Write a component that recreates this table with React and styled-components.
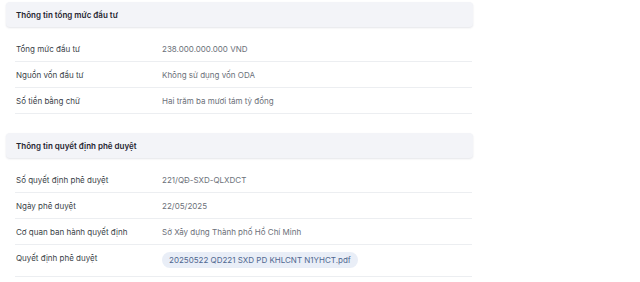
import React from "react";
import styled, { createGlobalStyle } from "styled-components";

const GlobalStyle = createGlobalStyle`
  body {
    margin: 0;
    background: #ffffff;
    font-family: Inter, "Noto Sans", sans-serif;
  }
`;

const Page = styled.div`
  width: 467px;
  padding: 2px 0 0 6px;
  display: flex;
  flex-direction: column;
  gap: 19px;
`;

const Section = styled.section`
  display: flex;
  flex-direction: column;
`;

const SectionHeader = styled.div`
  height: 25px;
  display: flex;
  align-items: center;
  padding-left: 10px;
  background: #f3f4f8;
  border-radius: 4px;
  box-shadow: 0 1px 2px rgba(30, 40, 70, 0.12);
  font-size: 8px;
  font-weight: 600;
  color: #1f2430;
  margin-bottom: 9px;
`;

const Row = styled.div`
  display: grid;
  grid-template-columns: 146px 1fr;
  align-items: ${(p) => (p.tall ? "start" : "center")};
  height: ${(p) => (p.tall ? 32 : 26)}px;
  padding: ${(p) => (p.tall ? "8px 0 0" : "0")};
  box-sizing: border-box;
  margin-left: 9px;
  margin-right: 1px;
  padding-left: 1px;
  border-bottom: 1px solid #eceef1;
  font-size: 8px;
`;

const Label = styled.div`
  color: #3a3f48;
`;

const Value = styled.div`
  color: #6b7079;
`;

const FilePill = styled.a`
  display: inline-flex;
  align-items: center;
  height: 16px;
  margin-top: -1px;
  padding: 0 7px;
  border-radius: 8px;
  background: #e9eef7;
  color: #4f6790;
  font-size: 8px;
  text-decoration: none;
  width: fit-content;
`;

const investment = [
  ["Tổng mức đầu tư", "238.000.000.000 VND"],
  ["Nguồn vốn đầu tư", "Không sử dụng vốn ODA"],
  ["Số tiền bằng chữ", "Hai trăm ba mươi tám tỷ đồng"],
];

const decision = [
  ["Số quyết định phê duyệt", "221/QĐ-SXD-QLXDCT"],
  ["Ngày phê duyệt", "22/05/2025"],
  ["Cơ quan ban hành quyết định", "Sở Xây dựng Thành phố Hồ Chí Minh"],
];

export default function App() {
  return (
    <>
      <GlobalStyle />
      <Page>
        <Section>
          <SectionHeader>Thông tin tổng mức đầu tư</SectionHeader>
          {investment.map(([l, v]) => (
            <Row key={l}>
              <Label>{l}</Label>
              <Value>{v}</Value>
            </Row>
          ))}
        </Section>
        <Section>
          <SectionHeader>Thông tin quyết định phê duyệt</SectionHeader>
          {decision.map(([l, v]) => (
            <Row key={l}>
              <Label>{l}</Label>
              <Value>{v}</Value>
            </Row>
          ))}
          <Row tall>
            <Label>Quyết định phê duyệt</Label>
            <FilePill href="#">20250522 QD221 SXD PD KHLCNT N1YHCT.pdf</FilePill>
          </Row>
        </Section>
      </Page>
    </>
  );
}
